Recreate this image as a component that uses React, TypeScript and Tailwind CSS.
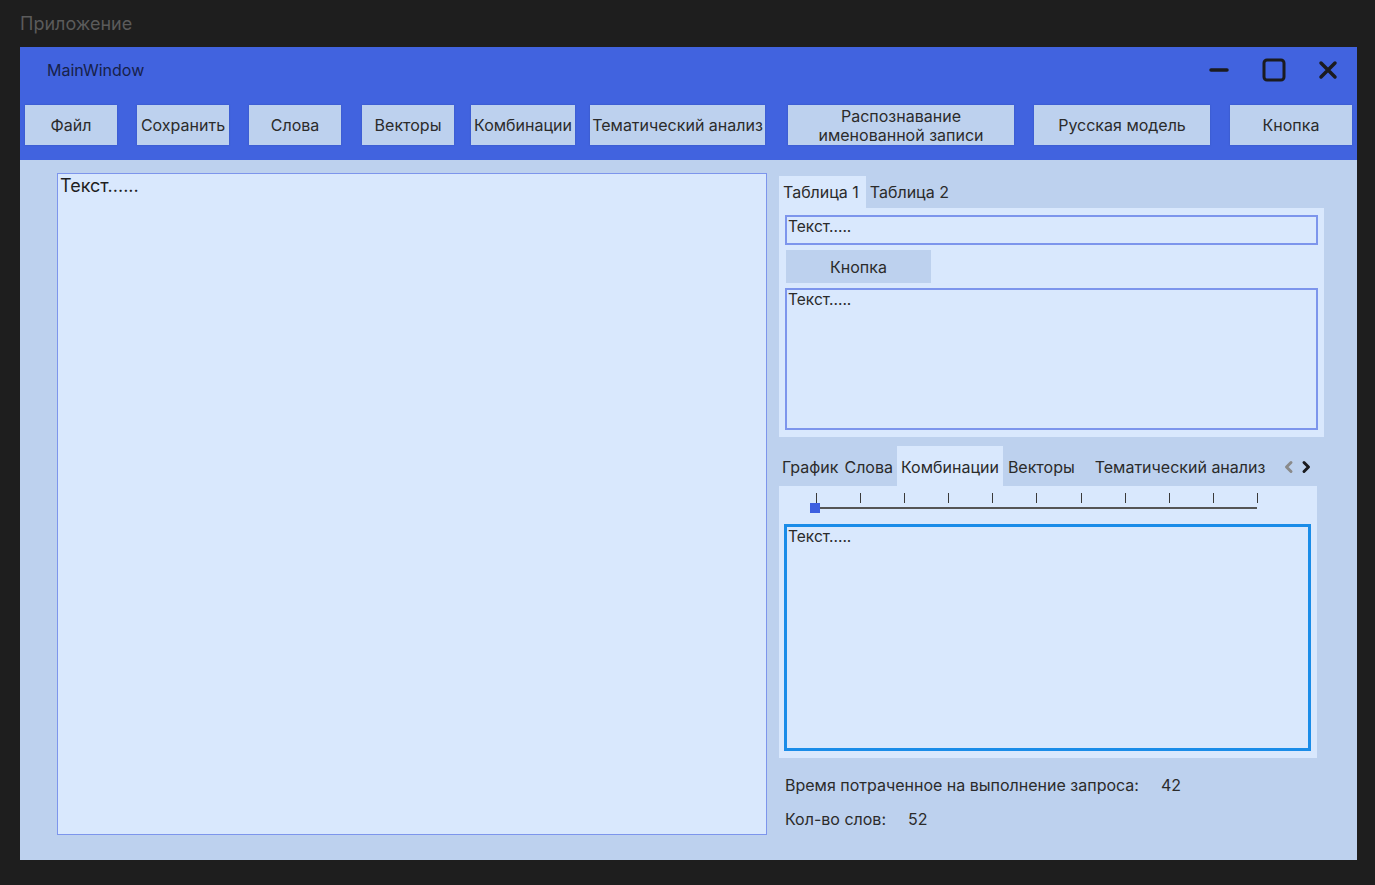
import React from 'react';

const font = { fontFamily: 'Inter, "Noto Sans", sans-serif' };

const toolbar: { label: string; w: string; ml: string }[] = [
  { label: 'Файл', w: 'w-[92px]', ml: 'ml-[5px]' },
  { label: 'Сохранить', w: 'w-[92px]', ml: 'ml-[20px]' },
  { label: 'Слова', w: 'w-[92px]', ml: 'ml-[20px]' },
  { label: 'Векторы', w: 'w-[92px]', ml: 'ml-[21px]' },
  { label: 'Комбинации', w: 'w-[104px]', ml: 'ml-[17px]' },
  { label: 'Тематический анализ', w: 'w-[175px]', ml: 'ml-[15px]' },
  { label: 'Распознавание именованной записи', w: 'w-[226px]', ml: 'ml-[23px]' },
  { label: 'Русская модель', w: 'w-[176px]', ml: 'ml-[20px]' },
  { label: 'Кнопка', w: 'w-[122px]', ml: 'ml-[20px]' },
];

function WindowControls() {
  return (
    <div className="flex items-center">
      <svg width="22" height="8" viewBox="0 0 22 8" className="mr-[32px]">
        <line x1="3" y1="4" x2="19" y2="4" stroke="#1b1b1f" strokeWidth="3.5" strokeLinecap="round" />
      </svg>
      <svg width="24" height="24" viewBox="0 0 24 24" className="mr-[32px]">
        <rect x="2" y="2" width="20" height="20" rx="3" fill="none" stroke="#1b1b1f" strokeWidth="3" />
      </svg>
      <svg width="20" height="20" viewBox="0 0 20 20">
        <path d="M3 3 L17 17 M17 3 L3 17" stroke="#1b1b1f" strokeWidth="3.5" strokeLinecap="round" />
      </svg>
    </div>
  );
}

function Slider() {
  const ticks = Array.from({ length: 11 }, (_, i) => i);
  return (
    <div className="relative h-[30px] ml-[31px] w-[446px]">
      <div className="flex justify-between w-[442px] ml-[1px] mt-[7px]">
        {ticks.map((t) => (
          <div key={t} className="w-px h-[10px] bg-[#3a3a3a]" />
        ))}
      </div>
      <div className="ml-[1px] mt-[4px] w-[441px] h-[2px] bg-[#555]" />
      <div className="absolute left-[-5px] top-[17px] w-[10px] h-[10px] bg-[#3d5fe0]" />
    </div>
  );
}

export default function App() {
  return (
    <div className="w-[1375px] h-[885px] bg-[#1e1e1e] text-[#2b2b2b] overflow-hidden" style={font}>
      <div className="h-[47px] pl-[20px] pt-[12px] text-[18px] leading-[24px] text-[#5b5b5b]">Приложение</div>
      <div className="ml-[20px] w-[1337px] h-[813px] flex flex-col">
        {/* header */}
        <div className="bg-[#4163df] h-[113px] flex flex-col">
          <div className="flex items-center justify-between h-[46px] pl-[27px] pr-[19px]">
            <span className="text-[16px] text-[#17214a]">MainWindow</span>
            <WindowControls />
          </div>
          <div className="flex mt-[12px]">
            {toolbar.map((b) => (
              <button
                key={b.label}
                className={`${b.w} ${b.ml} h-[40px] bg-[#bdd1ee] text-[16px] leading-[19px] text-[#2b2b2b] flex items-center justify-center text-center px-[1px] whitespace-nowrap shadow-[0_0_2px_rgba(0,0,0,0.15)]`}
              >
                {b.label === 'Распознавание именованной записи' ? (
                  <span className="leading-[19px] pt-[1px]">
                    Распознавание
                    <br />
                    именованной записи
                  </span>
                ) : (
                  b.label
                )}
              </button>
            ))}
          </div>
        </div>

        {/* body */}
        <div className="flex-1 bg-[#bdd1ee] flex pl-[37px] pt-[13px]">
          <div className="w-[710px] h-[662px] bg-[#d9e8fd] border border-[#7d95ec] pl-[2px] text-[18px] leading-[24px] text-[#1f1f1f]">
            Текст......
          </div>

          <div className="ml-[12px] w-[545px] flex flex-col pt-[3px]">
            {/* tabs 1 */}
            <div className="flex h-[32px] items-center text-[16px]">
              <div className="h-full bg-[#d9e8fd] pl-[4px] pr-[7px] flex items-center">Таблица 1</div>
              <div className="pl-[4px] flex items-center">Таблица 2</div>
            </div>
            <div className="bg-[#d9e8fd] h-[229px] pt-[7px] pl-[6px] pr-[6px] flex flex-col">
              <div className="h-[30px] border-2 border-[#7d95ec] text-[15.5px] leading-[20px] pl-[1px]">Текст.....</div>
              <button className="mt-[5px] ml-[1px] w-[145px] h-[33px] bg-[#bdd1ee] text-[16px] flex items-center justify-center pt-[1px]">
                Кнопка
              </button>
              <div className="mt-[5px] h-[142px] border-2 border-[#7d95ec] text-[15.5px] leading-[20px] pl-[1px]">Текст.....</div>
            </div>

            {/* tabs 2 */}
            <div className="mt-[9px] flex h-[40px] items-center text-[16px]">
              <span className="ml-[3px] pt-[1px]">График</span>
              <span className="ml-[6px] pt-[1px]">Слова</span>
              <div className="ml-[4px] h-full bg-[#d9e8fd] px-[4px] flex items-center pt-[1px]">Комбинации</div>
              <span className="ml-[5px] pt-[1px]">Векторы</span>
              <span className="ml-[20px] pt-[1px]">Тематический анализ</span>
              <div className="ml-[18px] flex items-center gap-[7px] pt-[1px]">
                <svg width="11" height="14" viewBox="0 0 11 14">
                  <path d="M8 2.5 L3.5 7 L8 11.5" fill="none" stroke="#8a8a8a" strokeWidth="3" strokeLinecap="round" strokeLinejoin="round" />
                </svg>
                <svg width="11" height="14" viewBox="0 0 11 14">
                  <path d="M3 2.5 L7.5 7 L3 11.5" fill="none" stroke="#1b1b1f" strokeWidth="3" strokeLinecap="round" strokeLinejoin="round" />
                </svg>
              </div>
            </div>
            <div className="bg-[#d9e8fd] w-[538px] h-[272px] pl-[5px] flex flex-col">
              <Slider />
              <div className="mt-[8px] w-[527px] h-[227px] border-[3px] border-[#1a8ce8] text-[15.5px] leading-[20px] pl-[1px]">
                Текст.....
              </div>
            </div>

            {/* stats */}
            <div className="mt-[16px] pl-[6px] text-[16px] flex flex-col gap-[12px]">
              <div className="flex h-[22px] items-center">
                <span>Время потраченное на выполнение запроса:</span>
                <span className="ml-[22px]">42</span>
              </div>
              <div className="flex h-[22px] items-center">
                <span>Кол-во слов:</span>
                <span className="ml-[22px]">52</span>
              </div>
            </div>
          </div>
        </div>
      </div>
    </div>
  );
}
